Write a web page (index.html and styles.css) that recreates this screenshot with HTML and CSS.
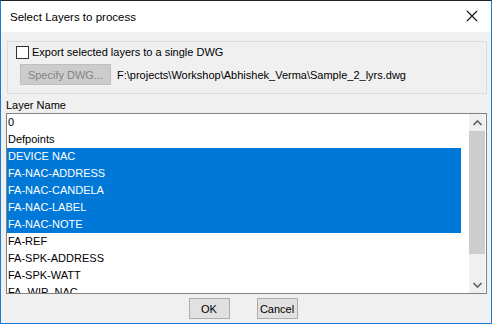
FILE: index.html
```html
<!DOCTYPE html>
<html lang="en">
<head>
  <meta charset="UTF-8">
  <title>Select Layers to process</title>
  <link rel="stylesheet" href="styles.css">
</head>
<body>
  <div class="window">
    <!-- title bar -->
    <div class="titlebar">
      <span class="title">Select Layers to process</span>
      <svg class="close" width="12" height="12" viewBox="0 0 12 12">
        <path d="M1 1 L11 11 M11 1 L1 11" stroke="#111" stroke-width="1.1" fill="none"/>
      </svg>
    </div>

    <div class="content">
      <div class="group">
        <label class="check-row">
          <span class="checkbox"></span>
          <span>Export selected layers to a single DWG</span>
        </label>
        <div class="file-row">
          <button class="btn btn-disabled" disabled>Specify DWG...</button>
          <span class="path">F:\projects\Workshop\Abhishek_Verma\Sample_2_lyrs.dwg</span>
        </div>
      </div>

      <div class="list-label">Layer Name</div>
      <div class="listbox">
        <div class="items">
          <div class="item">0</div>
          <div class="item">Defpoints</div>
          <div class="item selected">DEVICE NAC</div>
          <div class="item selected">FA-NAC-ADDRESS</div>
          <div class="item selected">FA-NAC-CANDELA</div>
          <div class="item selected">FA-NAC-LABEL</div>
          <div class="item selected">FA-NAC-NOTE</div>
          <div class="item">FA-REF</div>
          <div class="item">FA-SPK-ADDRESS</div>
          <div class="item">FA-SPK-WATT</div>
          <div class="item">FA_WIP_NAC</div>
        </div>
        <div class="scrollbar">
          <div class="arrow">
            <svg width="9" height="6" viewBox="0 0 9 6"><path d="M0.5 5 L4.5 1 L8.5 5" stroke="#606060" stroke-width="1.6" fill="none"/></svg>
          </div>
          <div class="thumb"></div>
          <div class="track"></div>
          <div class="arrow">
            <svg width="9" height="6" viewBox="0 0 9 6"><path d="M0.5 1 L4.5 5 L8.5 1" stroke="#606060" stroke-width="1.6" fill="none"/></svg>
          </div>
        </div>
      </div>

      <div class="actions">
        <button class="btn">OK</button>
        <button class="btn">Cancel</button>
      </div>
    </div>
  </div>
</body>
</html>
```

FILE: styles.css
```css
html, body {
  margin: 0;
  padding: 0;
  background: #ffffff;
  font-family: 'Segoe UI', 'Liberation Sans', sans-serif;
  font-size: 11px;
  color: #000;
  overflow: hidden;
}

.window {
  width: 490px;
  height: 322px;
  border: 1px solid #1c7bd4;
  border-top: 1px solid #222;
  background: #f0f0f0;
  display: flex;
  flex-direction: column;
}

.titlebar {
  height: 31px;
  background: #fff;
  display: flex;
  align-items: center;
  justify-content: space-between;
  padding: 0 9px 0 9px;
  flex-shrink: 0;
}

.title {
  font-size: 11.5px;
  padding-top: 1px;
}

.close {
  margin-right: 4px;
  margin-top: -1px;
}

.content {
  flex: 1;
  display: flex;
  flex-direction: column;
  padding: 9px 4px 0 5px;
}

.group {
  border: 1px solid #dcdcdc;
  margin-left: 1px;
  padding: 3px 0 0 8px;
  box-sizing: border-box;
  height: 53px;
}

.check-row {
  display: flex;
  align-items: center;
  gap: 3px;
  height: 14px;
}

.checkbox {
  width: 11px;
  height: 11px;
  border: 1px solid #333;
  background: #fff;
}

.file-row {
  display: flex;
  align-items: center;
  margin-top: 5px;
  padding-left: 4px;
  gap: 6px;
}

.btn {
  font-family: inherit;
  font-size: 11px;
  background: #e1e1e1;
  border: 1px solid #adadad;
  color: #000;
  padding: 0;
  height: 21px;
  width: 41px;
}

.btn-disabled {
  width: 91px;
  background: #cccccc;
  border-color: #bfbfbf;
  color: #838383;
}

.list-label {
  height: 16px;
  line-height: 16px;
  margin-top: 3px;
}

.listbox {
  height: 181px;
  border: 1px solid #828282;
  background: #fff;
  display: flex;
  justify-content: space-between;
  box-sizing: border-box;
  overflow: hidden;
}

.items {
  width: 454px;
}

.item {
  height: 17px;
  line-height: 17px;
  padding-left: 1px;
  white-space: nowrap;
}

.item.selected {
  background: #0078d7;
  color: #fff;
}

.scrollbar {
  width: 16px;
  margin-right: 1px;
  display: flex;
  flex-direction: column;
  background: #f0f0f0;
}

.arrow {
  height: 17px;
  display: flex;
  align-items: center;
  justify-content: center;
}

.thumb {
  height: 123px;
  background: #cdcdcd;
}

.track {
  flex: 1;
}

.actions {
  display: flex;
  justify-content: center;
  gap: 27px;
  margin-top: 4px;
  padding-right: 7px;
}
```
